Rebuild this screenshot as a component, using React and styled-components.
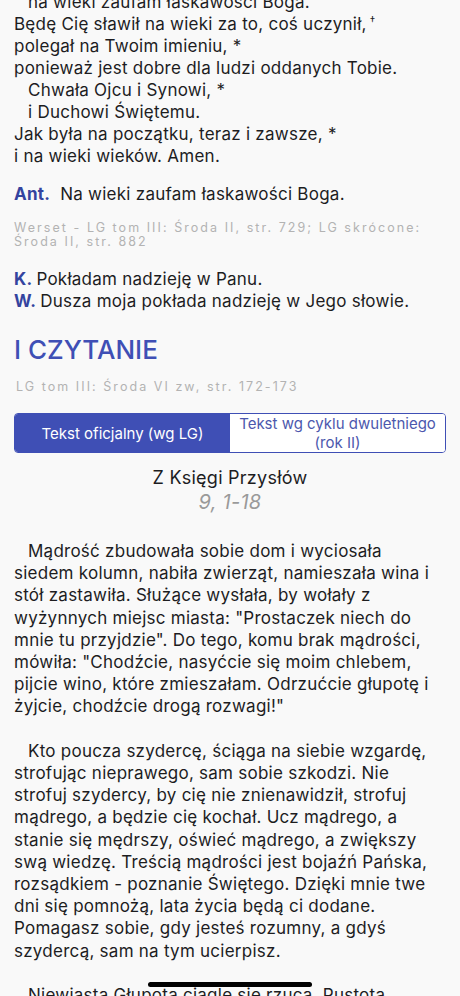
import React from "react";
import styled, { createGlobalStyle } from "styled-components";

const GlobalStyle = createGlobalStyle`
  html, body {
    margin: 0;
    padding: 0;
    background: #f9f9f9;
  }
  body {
    font-family: Inter, "Noto Sans", "Liberation Sans", sans-serif;
    color: #1d1d1f;
    -webkit-font-smoothing: antialiased;
  }
`;

const Page = styled.div`
  width: 460px;
  height: 996px;
  overflow: hidden;
  position: relative;
`;

const Content = styled.div`
  margin-top: -9px;
  padding: 0 14px;
  letter-spacing: 0.25px;
`;

const Verse = styled.div`
  font-size: 17px;
  line-height: 22px;
  padding-left: ${(p) => (p.$indent ? "14px" : "0")};
`;

const Mark = styled.sup`
  font-size: 11px;
  line-height: 0;
  vertical-align: 6px;
  margin-left: 3px;
`;

const Antiphon = styled.div`
  margin-top: 16px;
  font-size: 17px;
  line-height: 22px;
`;

const Label = styled.span`
  color: #34449f;
  font-weight: 700;
  margin-right: ${(p) => p.$gap || "4px"};
`;

const Source = styled.div`
  margin-top: ${(p) => p.$top || "16px"};
  font-size: 12.5px;
  line-height: 14px;
  letter-spacing: 2.05px;
  color: #b3b3b3;
  white-space: nowrap;
  padding-left: ${(p) => p.$pad || "0"};
`;

const Responses = styled.div`
  margin-top: 19px;
  font-size: 17px;
  line-height: 22px;
`;

const Heading = styled.h2`
  margin: 22px 0 0;
  font-size: 26px;
  line-height: 32px;
  font-weight: 500;
  letter-spacing: 0;
  color: #3f4fb5;
`;

const Segments = styled.div`
  margin-top: 19px;
  display: grid;
  grid-template-columns: 1fr 1fr;
  height: 38px;
  border: 1px solid #3f4fb5;
  border-radius: 4px;
  overflow: hidden;
  background: #fff;
`;

const Segment = styled.button`
  border: 0;
  outline: 0;
  padding: 0 4px;
  margin: 0;
  font-family: inherit;
  font-size: 15px;
  line-height: 19px;
  letter-spacing: 0;
  background: ${(p) => (p.$active ? "#3f4fb5" : "#ffffff")};
  color: ${(p) => (p.$active ? "#ffffff" : "#4c58ad")};
  display: flex;
  align-items: center;
  justify-content: center;
  text-align: center;
`;

const BookTitle = styled.div`
  margin-top: 13px;
  text-align: center;
  font-size: 18px;
  line-height: 24px;
`;

const Chapter = styled.div`
  text-align: center;
  font-size: 20px;
  line-height: 24px;
  font-style: italic;
  color: #9a9a9a;
`;

const Reading = styled.div`
  margin-top: 26px;
`;

const Paragraph = styled.div`
  margin: 0 0 22.2px;
  font-size: 17px;
  line-height: 22.2px;
  white-space: nowrap;
`;

const Line = styled.span`
  display: block;
  padding-left: ${(p) => (p.$first ? "14px" : "0")};
`;

const HomeBar = styled.div`
  position: absolute;
  left: 148px;
  bottom: 9px;
  width: 164px;
  height: 5px;
  border-radius: 3px;
  background: #000;
`;

const reading = [
  [
    "Mądrość zbudowała sobie dom i wyciosała",
    "siedem kolumn, nabiła zwierząt, namieszała wina i",
    "stół zastawiła. Służące wysłała, by wołały z",
    'wyżynnych miejsc miasta: "Prostaczek niech do',
    'mnie tu przyjdzie". Do tego, komu brak mądrości,',
    'mówiła: "Chodźcie, nasyćcie się moim chlebem,',
    "pijcie wino, które zmieszałam. Odrzućcie głupotę i",
    'żyjcie, chodźcie drogą rozwagi!"',
  ],
  [
    "Kto poucza szydercę, ściąga na siebie wzgardę,",
    "strofując nieprawego, sam sobie szkodzi. Nie",
    "strofuj szydercy, by cię nie znienawidził, strofuj",
    "mądrego, a będzie cię kochał. Ucz mądrego, a",
    "stanie się mędrszy, oświeć mądrego, a zwiększy",
    "swą wiedzę. Treścią mądrości jest bojaźń Pańska,",
    "rozsądkiem - poznanie Świętego. Dzięki mnie twe",
    "dni się pomnożą, lata życia będą ci dodane.",
    "Pomagasz sobie, gdy jesteś rozumny, a gdyś",
    "szydercą, sam na tym ucierpisz.",
  ],
  [
    "Niewiasta Głupota ciągle się rzuca. Pustota",
    "nie zna wstydu. Siada przed drzwiami swego",
  ],
];

export default function App() {
  return (
    <Page>
      <GlobalStyle />
      <Content>
        <Verse $indent>na wieki zaufam łaskawości Boga.</Verse>
        <Verse>
          Będę Cię sławił na wieki za to, coś uczynił,<Mark>†</Mark>
        </Verse>
        <Verse>polegał na Twoim imieniu, *</Verse>
        <Verse>ponieważ jest dobre dla ludzi oddanych Tobie.</Verse>
        <Verse $indent>Chwała Ojcu i Synowi, *</Verse>
        <Verse $indent>i Duchowi Świętemu.</Verse>
        <Verse>Jak była na początku, teraz i zawsze, *</Verse>
        <Verse>i na wieki wieków. Amen.</Verse>

        <Antiphon>
          <Label $gap="10px">Ant.</Label>Na wieki zaufam łaskawości Boga.
        </Antiphon>

        <Source>
          Werset - LG tom III: Środa II, str. 729; LG skrócone:
          <br />
          Środa II, str. 882
        </Source>

        <Responses>
          <div>
            <Label>K.</Label>Pokładam nadzieję w Panu.
          </div>
          <div>
            <Label>W.</Label>Dusza moja pokłada nadzieję w Jego słowie.
          </div>
        </Responses>

        <Heading>I CZYTANIE</Heading>
        <Source $top="14px" $pad="2px">
          LG tom III: Środa VI zw, str. 172-173
        </Source>

        <Segments>
          <Segment $active>Tekst oficjalny (wg LG)</Segment>
          <Segment>
            Tekst wg cyklu dwuletniego
            <br />
            (rok II)
          </Segment>
        </Segments>

        <BookTitle>Z Księgi Przysłów</BookTitle>
        <Chapter>9, 1-18</Chapter>

        <Reading>
          {reading.map((lines, i) => (
            <Paragraph key={i}>
              {lines.map((line, j) => (
                <Line key={j} $first={j === 0}>
                  {line}
                </Line>
              ))}
            </Paragraph>
          ))}
        </Reading>
      </Content>
      <HomeBar />
    </Page>
  );
}
